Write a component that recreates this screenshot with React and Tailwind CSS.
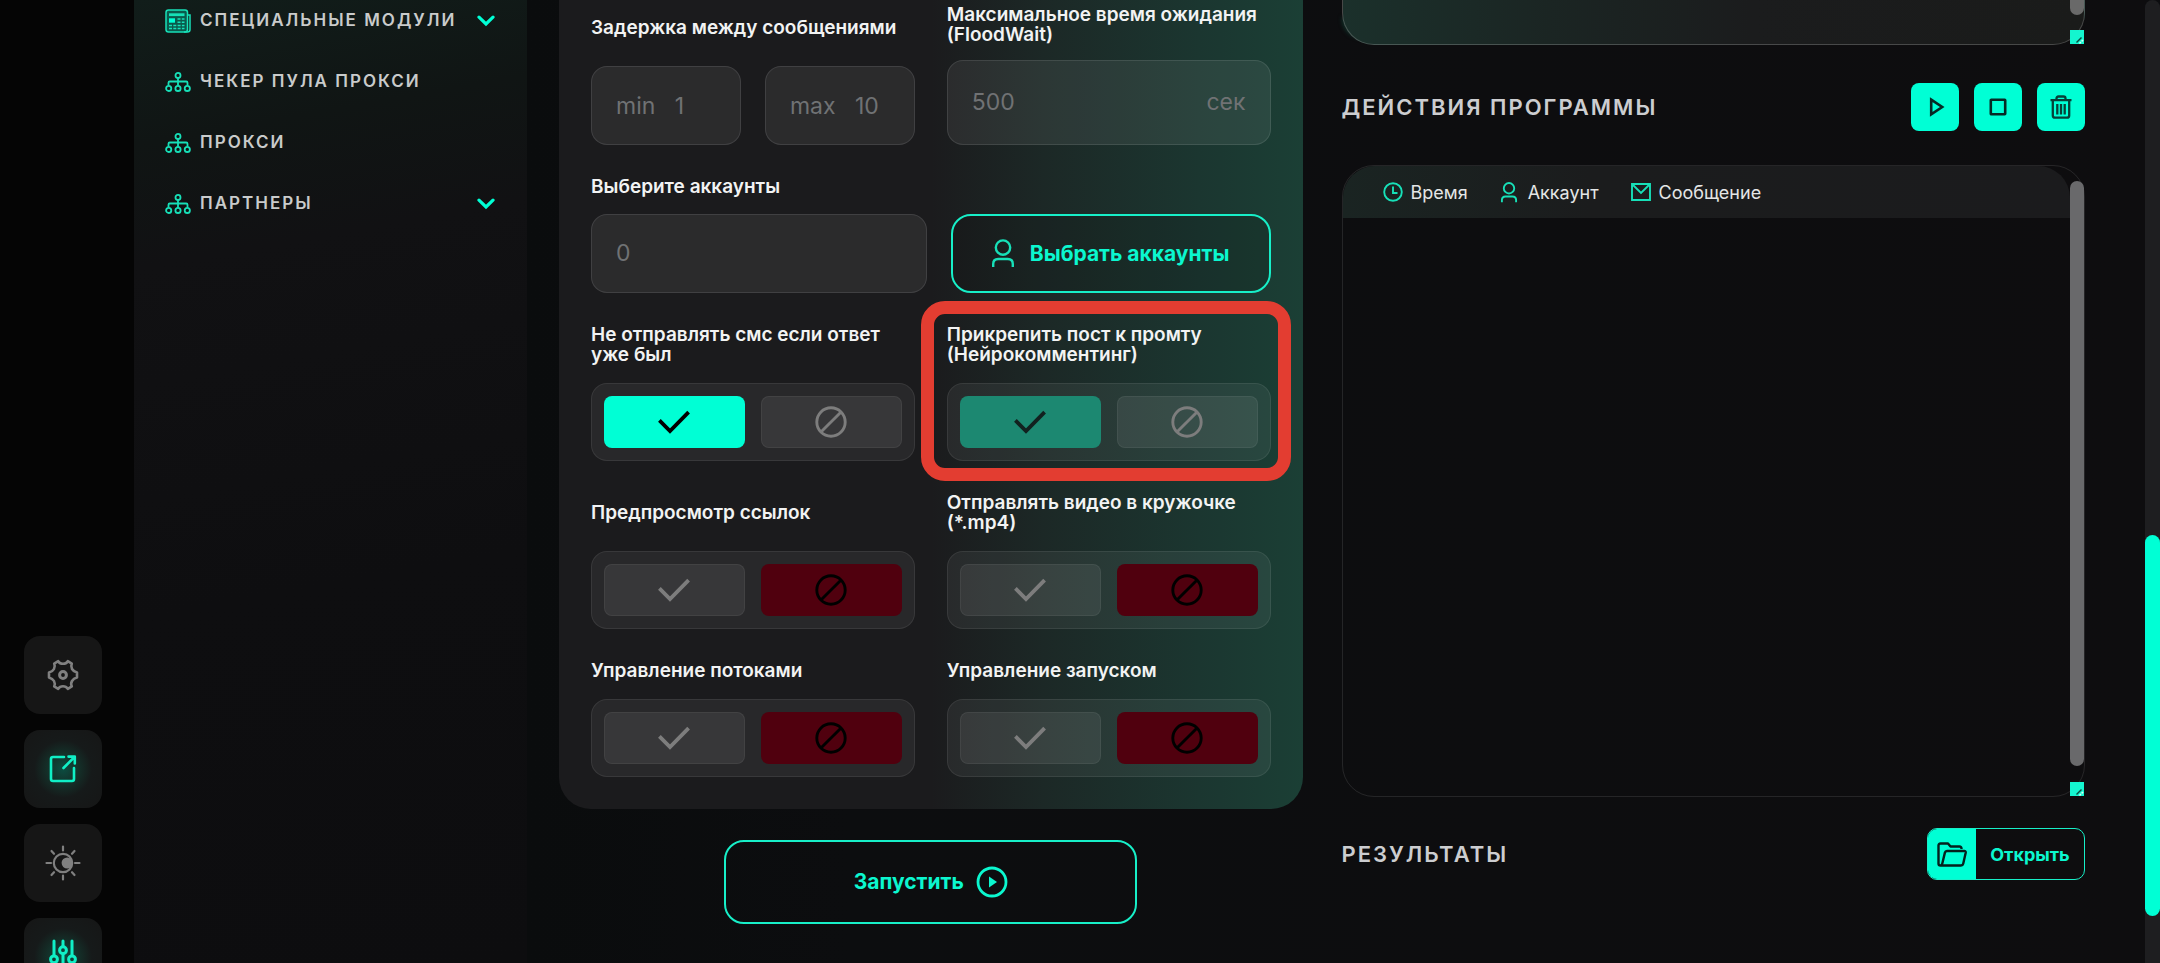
import React from "react";

const TEAL = "#00ffd5";

function NetworkIcon() {
  return (
    <svg width="26" height="20" viewBox="0 0 26 20" fill="none" stroke="#17e0b8" strokeWidth="1.8">
      <circle cx="13" cy="3.4" r="2.5" />
      <path d="M13 6v7.5M3.5 13v-2.2q0-1.3 1.3-1.3h16.4q1.3 0 1.3 1.3V13" />
      <circle cx="3.7" cy="16.4" r="2.6" />
      <circle cx="13" cy="16.4" r="2.6" />
      <circle cx="22.3" cy="16.4" r="2.6" />
    </svg>
  );
}

function NewsIcon() {
  return (
    <svg width="26" height="24" viewBox="0 0 26 24" fill="none" stroke="#17e0b8" strokeWidth="1.5">
      <rect x="1" y="1" width="21.5" height="22" rx="2.5" fill="#0a5a4c" />
      <path d="M22.5 6H25v14.5q0 2.5-2.5 2.5H19" />
      <path d="M4 5.7h15.5" strokeWidth="2.8" />
      <path d="M4 11.5h6" strokeWidth="4.4" stroke={TEAL} />
      <path d="M12.5 10h7M12.5 13.2h7M4 16.6h15.5M4 19.6h15.5" strokeDasharray="3 1.3" />
    </svg>
  );
}

function Chevron() {
  return (
    <svg width="18" height="12" viewBox="0 0 18 12" fill="none" stroke={TEAL} strokeWidth="3.2" strokeLinecap="round">
      <path d="M2 2.2l7 6.8 7-6.8" />
    </svg>
  );
}

function UserIcon({ width, height, strokeWidth }) {
  return (
    <svg width={width} height={height} viewBox="0 0 22 29" fill="none" stroke="#17e0b8" strokeWidth={strokeWidth}>
      <circle cx="11" cy="8.6" r="7.2" />
      <path d="M1.2 28v-3q0-5 5-5h9.6q5 0 5 5v3" />
    </svg>
  );
}

function CheckIcon() {
  return (
    <svg width="32" height="24" viewBox="0 0 32 24" fill="none" stroke="currentColor" strokeWidth="3.8">
      <path d="M1.4 10.4L12 21 30.6 2.2" />
    </svg>
  );
}

function BanIcon() {
  return (
    <svg width="32" height="32" viewBox="0 0 32 32" fill="none" stroke="currentColor" strokeWidth="2.9">
      <circle cx="16" cy="16" r="14.2" />
      <path d="M6.200 25.800L25.800 6.200" />
    </svg>
  );
}

function GearIcon() {
  return (
    <svg width="32" height="32" viewBox="0 0 32 32" fill="none" stroke="#808080" strokeWidth="2.6" strokeLinejoin="round">
      <path d="M11.200 2.200Q12.800 4.800 16 4.800T20.800 2.200L24.800 4.600Q23.600 7.600 25 10T30 13.600V18.400Q26.600 19.200 25 22T24.800 27.400L20.800 29.800Q19.200 27.200 16 27.200T11.200 29.800L7.200 27.400Q8.400 24.600 7 22T2 18.400V13.600Q5.600 12.600 7 10T7.200 4.600Z" />
      <circle cx="16" cy="16" r="3.400" strokeWidth="3" />
    </svg>
  );
}

function ShareIcon() {
  return (
    <svg width="28" height="28" viewBox="0 0 28 28" fill="none" stroke="#10efc6" strokeWidth="2.600" strokeLinecap="round" strokeLinejoin="round">
      <path d="M15 2H4Q2 2 2 4V24Q2 26 4 26H23Q25 26 25 24V13" />
      <path d="M14.500 13L25.500 2M19.500 1.600H25.800V8.500" />
    </svg>
  );
}

function BrightnessIcon() {
  return (
    <svg width="36" height="36" viewBox="0 0 36 36" fill="none" stroke="#808080" strokeWidth="2.200" strokeLinecap="round">
      <circle cx="18" cy="18" r="9.200" />
      <circle cx="22.200" cy="18" r="5.600" fill="#808080" stroke="none" />
      <path d="M18 1.500v4M18 30.500v4M1.500 18h4.500M30 18h4.500M6.500 6l2.500 2.800M29.500 6L27 8.800M6.500 30l2.500-2.800M29.500 30L27 27.200" />
    </svg>
  );
}

function SlidersIcon() {
  return (
    <svg width="28" height="36" viewBox="0 0 28 36" fill="none" stroke="#10efc6" strokeWidth="3" strokeLinecap="round">
      <path d="M5 2v14.500M14 2v5.500M23 2v14.500M14 15v19M5 24.500V34M23 24.500V34" />
      <circle cx="5" cy="20.300" r="3.400" />
      <circle cx="14" cy="11.200" r="3.400" />
      <circle cx="23" cy="20.300" r="3.400" />
    </svg>
  );
}

function PlayIcon() {
  return (
    <svg width="16" height="20" viewBox="0 0 16 20" fill="none" stroke="#062a25" strokeWidth="2.600">
      <path d="M2.200 2.600L13.200 10 2.200 17.400Z" />
    </svg>
  );
}

function StopIcon() {
  return (
    <svg width="18" height="18" viewBox="0 0 18 18" fill="none" stroke="#062a25" strokeWidth="2.600">
      <rect x="1.800" y="1.800" width="14.400" height="14.400" rx="0.500" />
    </svg>
  );
}

function TrashIcon() {
  return (
    <svg width="22" height="24" viewBox="0 0 22 24" fill="none" stroke="#064038" strokeWidth="2.300">
      <path d="M0.500 5.200h21M6.500 4.500V3.500q0-2 2-2h5q2 0 2 2v1M2.800 5.500V20.500q0 2.200 2.200 2.200h12q2.200 0 2.200-2.200V5.500M7.300 9v10.500M11 9v10.500M14.700 9v10.500" />
    </svg>
  );
}

function FolderIcon() {
  return (
    <svg width="30" height="25" viewBox="0 0 30 25" fill="none" stroke="#04211d" strokeWidth="2.400" strokeLinejoin="round">
      <path d="M24.500 7V6.500Q24.500 4.500 22.500 4.500H13.500L11 1.500H3.500Q1.500 1.500 1.500 3.500V21.500Q1.500 23.500 3.500 23.500H24Q25.800 23.500 26.200 21.800L28.700 10.800Q29 9 27.200 9H10Q8.300 9 7.900 10.600L5.300 21.500Q4.800 23.500 3.500 23.500" />
    </svg>
  );
}

function ClockIcon() {
  return (
    <svg width="20" height="20" viewBox="0 0 20 20" fill="none" stroke="#17e0b8" strokeWidth="1.900">
      <circle cx="10" cy="10" r="8.800" />
      <path d="M10 4.500V11h4.500" />
    </svg>
  );
}

function MailIcon() {
  return (
    <svg width="20" height="18" viewBox="0 0 20 18" fill="none" stroke="#17e0b8" strokeWidth="1.900">
      <path d="M1 1h18v16H1zM1 1l9 9 9-9" />
    </svg>
  );
}

function ResizeHandle() {
  return (
    <svg className="absolute right-0 bottom-0" width="14" height="14" viewBox="0 0 14 14" aria-hidden="true">
      <path d="M0 0h14v14H0z" fill="#14f5cf" />
      <path d="M6.500 12.500l5-5" stroke="#0b4a40" strokeWidth="1.500" />
      <path d="M9.500 13.500l4-4" stroke="#d8fff7" strokeWidth="1.500" strokeDasharray="2 1" />
    </svg>
  );
}

const menu = [
  { title: "СПЕЦИАЛЬНЫЕ МОДУЛИ", icon: NewsIcon, more: true },
  { title: "ЧЕКЕР ПУЛА ПРОКСИ", icon: NetworkIcon },
  { title: "ПРОКСИ", icon: NetworkIcon },
  { title: "ПАРТНЕРЫ", icon: NetworkIcon, more: true },
];

const rail = [
  { name: "Настройки", icon: GearIcon },
  { name: "Открыть окно", icon: ShareIcon, glow: true },
  { name: "Яркость", icon: BrightnessIcon },
  { name: "Параметры", icon: SlidersIcon, glow: true },
];

const fieldBox = "min-w-0 rounded-2xl border border-white/10 bg-white/[0.07] px-6";
const fieldText = "text-[23px] text-[#707274] placeholder:text-[#707274] outline-none";
const labelText = "text-[19px] leading-5 font-semibold text-[#f2f3f3]";

function Switch({ id, title, on, dimmed, marked }) {
  const idle = "border border-white/[0.06] bg-white/[0.07] text-[#7d7d7d]";
  const left = on
    ? dimmed
      ? "bg-[#1c8871] text-[#12211f]"
      : "bg-[#00ffd5] text-black"
    : idle;
  const right = on ? idle : "bg-[#50000e] text-black";
  return (
    <div role="group" aria-labelledby={id} className="relative flex flex-col gap-[18px]">
      <div id={id} className={labelText + " flex flex-1 items-center"}>
        <span className="whitespace-pre-line">{title}</span>
      </div>
      <div className="grid h-[78px] grid-cols-2 gap-4 rounded-2xl border border-white/[0.08] bg-white/[0.06] p-3">
        <button type="button" aria-label="Да" aria-pressed={on} className={"flex items-center justify-center rounded-lg " + left}>
          <CheckIcon />
        </button>
        <button type="button" aria-label="Нет" aria-pressed={!on} className={"flex items-center justify-center rounded-lg " + right}>
          <BanIcon />
        </button>
      </div>
      {marked && (
        <div className="pointer-events-none absolute -top-6 -right-5 -bottom-5 -left-[26px] rounded-3xl border-[13px] border-[#e33d31]" />
      )}
    </div>
  );
}

export default function App() {
  return (
    <div className="flex h-screen overflow-hidden bg-[#0d0d0f] font-['Inter','Noto_Sans',sans-serif]">
      <aside className="flex w-[134px] shrink-0 flex-col gap-4 bg-[#050505] pt-[636px] pl-6">
        {rail.map(({ name, icon: Icon, glow }) => (
          <button
            key={name}
            aria-label={name}
            className={
              "flex size-[78px] shrink-0 items-center justify-center rounded-2xl " +
              (glow
                ? "bg-[radial-gradient(circle,#0b4d41_0%,#143029_28%,#161a1a_52%,#161616_100%)]"
                : "bg-[#161616]")
            }
          >
            <Icon />
          </button>
        ))}
      </aside>

      <nav className="w-[393px] shrink-0 bg-[linear-gradient(170deg,#111d1a_0%,#101514_14%,#111113_26%,#0e0e10_60%,#0d0d0f_100%)] pr-8 pl-[31px]">
        <ul className="-mt-[10px]">
          {menu.map(({ title, icon: Icon, more }) => (
            <li key={title}>
              <a href="#" className="flex h-[61px] items-center gap-2 text-[17px] font-semibold tracking-[2px] text-[#c9cbcb]">
                <span className="flex w-[27px] shrink-0">
                  <Icon />
                </span>
                <span className="flex-1 whitespace-nowrap">{title}</span>
                {more && <Chevron />}
              </a>
            </li>
          ))}
        </ul>
      </nav>

      <main className="grid min-w-0 flex-1 grid-cols-2 gap-[39px] bg-[linear-gradient(90deg,#0a0c0d_0%,#0c0d0f_20%,#0e0d0f_100%)] pr-[60px] pl-8">
        <section className="flex min-w-0 flex-col items-center gap-[31px]">
          <form className="flex w-full flex-col gap-8 rounded-b-[32px] bg-[linear-gradient(90deg,#1b1b1d_0%,#1b1b1d_50%,#1c2826_65%,#1b3630_86%,#1b3f35_100%)] px-8 pt-[5px] pb-8">
            <div className="grid grid-cols-2 gap-8">
              <div className="flex flex-col gap-[15px]">
                <div className={labelText + " flex flex-1 items-center whitespace-nowrap"}>
                  Задержка между сообщениями
                </div>
                <div className="grid grid-cols-2 gap-6">
                  <input aria-label="Минимальная задержка" placeholder={"min\u00a0\u00a0 1"} className={fieldBox + " h-[79px] " + fieldText} />
                  <input aria-label="Максимальная задержка" placeholder={"max\u00a0\u00a0 10"} className={fieldBox + " h-[79px] " + fieldText} />
                </div>
              </div>
              <div className="flex flex-col gap-[15px]">
                <label htmlFor="flood" className={labelText + " whitespace-pre-line"}>
                  {"Максимальное время ожидания\n(FloodWait)"}
                </label>
                <div className={fieldBox + " flex h-[85px] items-center " + fieldText}>
                  <input id="flood" placeholder="500" className={"min-w-0 flex-1 bg-transparent " + fieldText} />
                  <span>сек</span>
                </div>
              </div>
            </div>

            <div className="flex flex-col gap-[17px]">
              <label htmlFor="accounts" className={labelText}>
                Выберите аккаунты
              </label>
              <div className="grid h-[79px] grid-cols-[336fr_320fr] gap-6">
                <input id="accounts" placeholder="0" className={fieldBox + " " + fieldText} />
                <button
                  type="button"
                  className="flex min-w-0 items-center justify-center gap-4 rounded-[20px] border-2 border-[#17efc8] bg-black/10 text-[21px] font-bold whitespace-nowrap text-[#0bf7cf]"
                >
                  <UserIcon width={22} height={29} strokeWidth={2.4} />
                  Выбрать аккаунты
                </button>
              </div>
            </div>

            <div className="grid grid-cols-2 gap-8">
              <Switch id="sw-answer" title={"Не отправлять смс если ответ\nуже был"} on />
              <Switch id="sw-post" title={"Прикрепить пост к промту\n(Нейрокомментинг)"} on dimmed marked />
            </div>
            <div className="grid grid-cols-2 gap-8">
              <Switch id="sw-links" title="Предпросмотр ссылок" on={false} />
              <Switch id="sw-video" title={"Отправлять видео в кружочке\n(*.mp4)"} on={false} />
            </div>
            <div className="grid grid-cols-2 gap-8">
              <Switch id="sw-threads" title="Управление потоками" on={false} />
              <Switch id="sw-start" title="Управление запуском" on={false} />
            </div>
          </form>

          <button className="flex h-[84px] w-[413px] shrink-0 items-center justify-center gap-3 rounded-[20px] border-2 border-[#17efc8] text-[21px] font-bold text-[#0bf7cf]">
            Запустить
            <svg width="32" height="32" viewBox="0 0 32 32" fill="none" stroke="currentColor" strokeWidth="2.8">
              <circle cx="16" cy="16" r="14" />
              <path d="M13 10.500l8 5.500-8 5.500z" fill="currentColor" stroke="none" />
            </svg>
          </button>
        </section>

        <section className="flex min-w-0 flex-col">
          <div className="relative h-[45px] shrink-0 rounded-b-[32px] border border-t-0 border-white/20 bg-[linear-gradient(90deg,#1b302b_0%,#1b2523_28%,#1b1c1d_55%,#1a1b1a_100%)] shadow-[-12px_5px_4px_-12px_#10352c]">
            <div className="absolute top-0 right-0 h-[15px] w-[14px] rounded-b-full bg-[#696969]" />
            <ResizeHandle />
          </div>

          <div className="mt-[38px] flex h-12 items-center justify-between">
            <h2 className="text-[22px] font-semibold tracking-[2px] text-[#cccdd0]">ДЕЙСТВИЯ ПРОГРАММЫ</h2>
            <div className="flex gap-[15px]">
              <button aria-label="Запустить" className="flex size-12 items-center justify-center rounded-lg bg-[#00ffd5] pl-1">
                <PlayIcon />
              </button>
              <button aria-label="Остановить" className="flex size-12 items-center justify-center rounded-lg bg-[#00ffd5]">
                <StopIcon />
              </button>
              <button aria-label="Очистить" className="flex size-12 items-center justify-center rounded-lg bg-[#00ffd5]">
                <TrashIcon />
              </button>
            </div>
          </div>

          <div className="relative mt-[34px] h-[632px] shrink-0 rounded-[32px] border border-white/10 pr-[14px]">
            <div className="overflow-hidden rounded-t-[32px] bg-[linear-gradient(90deg,#1a2422_0%,#1b1c1d_34%,#1b1b1d_100%)]">
              <table className="w-full text-[18px] text-[#e4e6e6]">
                <thead>
                  <tr className="h-[52px]">
                    <th className="w-px pr-8 pl-10 font-normal">
                      <span className="flex items-center gap-2">
                        <ClockIcon />
                        Время
                      </span>
                    </th>
                    <th className="w-px pr-8 font-normal">
                      <span className="flex items-center gap-2.5">
                        <UserIcon width={18} height={21} strokeWidth={2.6} />
                        Аккаунт
                      </span>
                    </th>
                    <th className="font-normal">
                      <span className="flex items-center gap-2">
                        <MailIcon />
                        Сообщение
                      </span>
                    </th>
                  </tr>
                </thead>
              </table>
            </div>
            <div className="absolute top-[15px] right-0 bottom-[30px] w-[14px] rounded-full bg-[#69696b]" />
            <ResizeHandle />
          </div>

          <div className="mt-[31px] flex h-[52px] items-center justify-between">
            <h2 className="text-[22px] font-semibold tracking-[2px] text-[#cccdd0]">РЕЗУЛЬТАТЫ</h2>
            <button className="flex h-full w-[158px] overflow-hidden rounded-[10px] border border-[#17efc8] text-[18px] font-bold text-[#0bf7cf]">
              <span className="flex h-full w-12 items-center justify-center bg-[#00ffd5]">
                <FolderIcon />
              </span>
              <span className="flex h-full flex-1 items-center justify-center">Открыть</span>
            </button>
          </div>
        </section>
      </main>

      <div className="w-[15px] shrink-0 rounded-t-lg bg-[#1e1e20] pt-[535px]" aria-hidden="true">
        <div className="h-[381px] rounded-full bg-[#00ffd5]" />
      </div>
    </div>
  );
}
